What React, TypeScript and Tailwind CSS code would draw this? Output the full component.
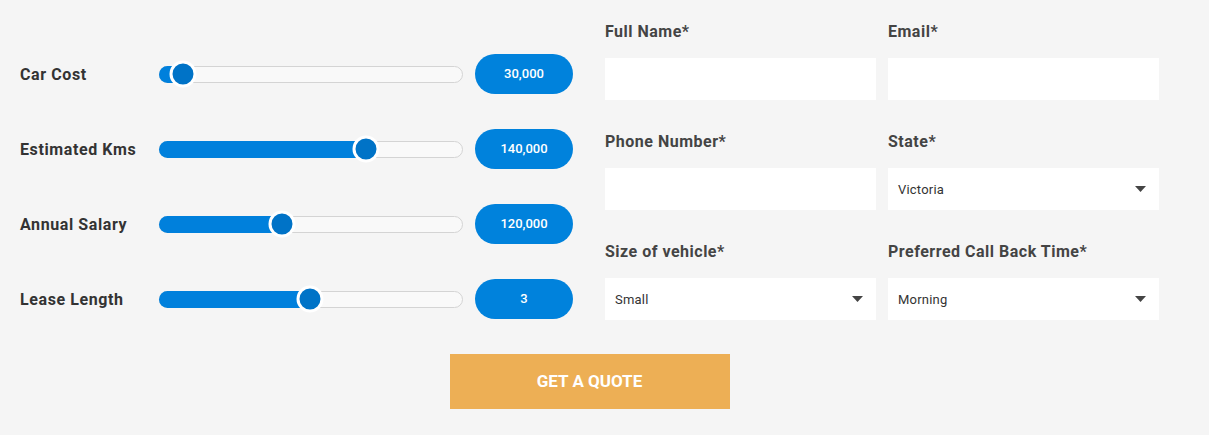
import React from "react";

const rows = [
  { label: "Car Cost", value: "30,000", pos: 23 },
  { label: "Estimated Kms", value: "140,000", pos: 206 },
  { label: "Annual Salary", value: "120,000", pos: 122 },
  { label: "Lease Length", value: "3", pos: 150 },
];

function Slider({ pos }: { pos: number }) {
  return (
    <div className="relative w-[304px] h-[17px] rounded-full bg-[#f9f9f9] border border-[#d4d4d4]">
      <div
        className="absolute left-[-1px] top-[-1px] h-[17px] rounded-full bg-[#0080dc]"
        style={{ width: pos + 8 }}
      />
      <div
        className="absolute top-1/2 w-[27px] h-[27px] -translate-x-1/2 -translate-y-1/2 rounded-full bg-[#0073c7] border-[3px] border-white"
        style={{ left: pos }}
      />
    </div>
  );
}

function Caret() {
  return (
    <svg width="11" height="6" viewBox="0 0 11 6" className="block">
      <path d="M0 0 L11 0 L5.5 6 Z" fill="#444" />
    </svg>
  );
}

function Field({ label, select }: { label: string; select?: string }) {
  return (
    <div className="flex flex-col">
      <div className="h-[20px] leading-[20px] pt-[1px] box-content -mb-[1px] text-[16px] tracking-[0.5px] font-bold text-[#444]">{label}</div>
      <div className="mt-[17px] h-[42px] bg-white flex items-center justify-between pl-[10px] pr-[13px]">
        {select ? (
          <>
            <span className="text-[13px] tracking-[0.2px] text-[#333] pt-[1px]">{select}</span>
            <Caret />
          </>
        ) : null}
      </div>
    </div>
  );
}

export default function App() {
  return (
    <div
      className="w-[1209px] h-[435px] bg-[#f5f5f5] overflow-hidden"
      style={{ fontFamily: "Roboto, 'Liberation Sans', sans-serif" }}
    >
      <div className="flex pl-[20px]">
        <div className="w-[553px] pt-[54px] flex flex-col gap-[35px]">
          {rows.map((r) => (
            <div key={r.label} className="h-[40px] flex items-center">
              <div className="w-[139px] text-[16px] tracking-[0.6px] font-bold text-[#333] pt-[1px]">{r.label}</div>
              <Slider pos={r.pos} />
              <div className="ml-[12px] w-[98px] h-[40px] rounded-full bg-[#0082dc] flex items-center justify-center text-white text-[13px] font-medium">
                {r.value}
              </div>
            </div>
          ))}
        </div>
        <div className="ml-[32px] w-[554px] pt-[21px] grid grid-cols-2 gap-x-[12px] gap-y-[31px]">
          <Field label="Full Name*" />
          <Field label="Email*" />
          <Field label="Phone Number*" />
          <Field label="State*" select="Victoria" />
          <Field label="Size of vehicle*" select="Small" />
          <Field label="Preferred Call Back Time*" select="Morning" />
        </div>
      </div>
      <div className="ml-[20px] w-[1139px] mt-[34px] flex justify-center">
        <button className="w-[280px] h-[55px] bg-[#edaf55] text-white text-[17px] font-bold">
          GET A QUOTE
        </button>
      </div>
    </div>
  );
}
